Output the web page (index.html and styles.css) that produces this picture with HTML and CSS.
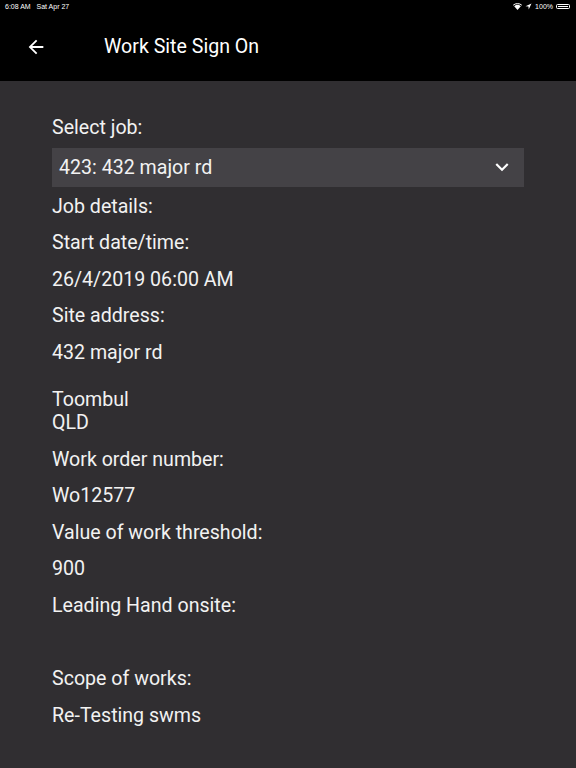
FILE: index.html
```html
<!DOCTYPE html>
<html>
<head>
<meta charset="utf-8">
<link rel="stylesheet" href="styles.css">
</head>
<body>
<div class="top">
  <div class="status">
    <span class="time">6:08 AM&nbsp;&nbsp;&nbsp;Sat Apr 27</span>
    <span class="right">
      <svg width="9" height="7" viewBox="0 0 9 7"><path d="M4.5 7 L1.2 3.2 A5 5 0 0 1 7.8 3.2 Z" fill="#fff"/><path d="M0.2 2.2 A6.5 6.5 0 0 1 8.8 2.2" stroke="#fff" stroke-width="1" fill="none"/></svg>
      <svg width="7" height="7" viewBox="0 0 7 7"><path d="M6.5 0.5 L0.5 3.3 L3.5 3.5 L3.7 6.5 Z" fill="#fff"/></svg>
      <span>100%</span>
      <span class="batt"><span class="fill"></span></span>
    </span>
  </div>
  <div class="appbar">
    <svg class="back" width="22" height="22" viewBox="0 0 24 24"><path d="M20 11H7.83l5.59-5.59L12 4l-8 8 8 8 1.41-1.41L7.83 13H20v-2z" fill="#fff"/></svg>
    <span class="title">Work Site Sign On</span>
  </div>
</div>
<div class="content">
  <div class="row">Select job:</div>
  <div class="select">
    <span>423: 432 major rd</span>
    <svg width="26" height="26" viewBox="0 0 24 24"><path d="M7.41 8.59 12 13.17l4.59-4.58L18 10l-6 6-6-6z" fill="#fff"/></svg>
  </div>
  <div class="row first">Job details:</div>
  <div class="row">Start date/time:</div>
  <div class="row">26/4/2019 06:00 AM</div>
  <div class="row">Site address:</div>
  <div class="row">432 major rd</div>
  <div class="addr">Toombul<br>QLD</div>
  <div class="row">Work order number:</div>
  <div class="row">Wo12577</div>
  <div class="row">Value of work threshold:</div>
  <div class="row">900</div>
  <div class="row">Leading Hand onsite:</div>
  <div class="row"></div>
  <div class="row">Scope of works:</div>
  <div class="row">Re-Testing swms</div>
</div>
</body>
</html>
```
FILE: styles.css
```css
html, body {
  margin: 0;
  padding: 0;
  background: #302e31;
  font-family: Roboto, "Liberation Sans", sans-serif;
  color: #f2f2f2;
}
body { width: 576px; height: 768px; overflow: hidden; }
.top {
  background: #000;
  height: 81px;
}
.status {
  height: 12px;
  display: flex;
  justify-content: space-between;
  align-items: center;
  padding: 0 6px 0 5px;
  font-size: 7px;
  color: #fff;
  font-family: "Liberation Sans", sans-serif;
}
.status .right {
  display: flex;
  align-items: center;
  gap: 3px;
}
.batt {
  width: 14px;
  height: 5px;
  border: 1px solid #fff;
  border-radius: 1.5px;
  padding: 1px;
  box-sizing: border-box;
  display: flex;
}
.batt .fill { flex: 1; background: #fff; }
.appbar {
  height: 69px;
  display: flex;
  align-items: center;
}
.back { margin-left: 25px; }
.title {
  margin-left: 57px;
  font-size: 19.6px;
  color: #fff;
}
.content {
  padding: 29px 52px 0 52px;
}
.row {
  height: 36.6px;
  line-height: 36.6px;
  font-size: 19.6px;
  white-space: nowrap;
}
.select {
  margin-top: 1px;
  height: 39px;
  background: #444246;
  display: flex;
  align-items: center;
  justify-content: space-between;
  padding: 0 9px 0 7px;
  font-size: 19.6px;
}
.row.first { margin-top: 2px; }
.addr {
  font-size: 19.6px;
  line-height: 23px;
  padding: 16px 0 8px;
}
```
